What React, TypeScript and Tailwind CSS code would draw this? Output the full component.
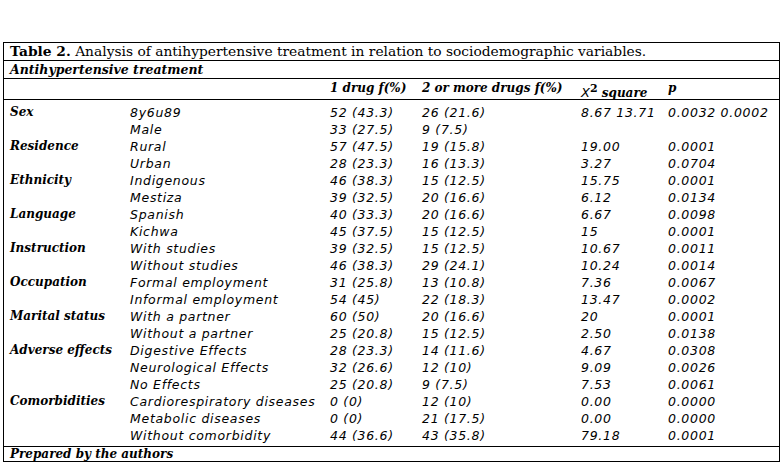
const rows: [string, string, string, string, string, string][] = [
  ["Sex", "8y6u89", "52 (43.3)", "26 (21.6)", "8.67 13.71", "0.0032 0.0002"],
  ["", "Male", "33 (27.5)", "9 (7.5)", "", ""],
  ["Residence", "Rural", "57 (47.5)", "19 (15.8)", "19.00", "0.0001"],
  ["", "Urban", "28 (23.3)", "16 (13.3)", "3.27", "0.0704"],
  ["Ethnicity", "Indigenous", "46 (38.3)", "15 (12.5)", "15.75", "0.0001"],
  ["", "Mestiza", "39 (32.5)", "20 (16.6)", "6.12", "0.0134"],
  ["Language", "Spanish", "40 (33.3)", "20 (16.6)", "6.67", "0.0098"],
  ["", "Kichwa", "45 (37.5)", "15 (12.5)", "15", "0.0001"],
  ["Instruction", "With studies", "39 (32.5)", "15 (12.5)", "10.67", "0.0011"],
  ["", "Without studies", "46 (38.3)", "29 (24.1)", "10.24", "0.0014"],
  ["Occupation", "Formal employment", "31 (25.8)", "13 (10.8)", "7.36", "0.0067"],
  ["", "Informal employment", "54 (45)", "22 (18.3)", "13.47", "0.0002"],
  ["Marital status", "With a partner", "60 (50)", "20 (16.6)", "20", "0.0001"],
  ["", "Without a partner", "25 (20.8)", "15 (12.5)", "2.50", "0.0138"],
  ["Adverse effects", "Digestive Effects", "28 (23.3)", "14 (11.6)", "4.67", "0.0308"],
  ["", "Neurological Effects", "32 (26.6)", "12 (10)", "9.09", "0.0026"],
  ["", "No Effects", "25 (20.8)", "9 (7.5)", "7.53", "0.0061"],
  ["Comorbidities", "Cardiorespiratory diseases", "0 (0)", "12 (10)", "0.00", "0.0000"],
  ["", "Metabolic diseases", "0 (0)", "21 (17.5)", "0.00", "0.0000"],
  ["", "Without comorbidity", "44 (36.6)", "43 (35.8)", "79.18", "0.0001"],
];

const serif = "font-['DejaVu_Serif',serif]";
const sans = "font-['DejaVu_Sans',Verdana,sans-serif]";
const cols = "grid grid-cols-[120px_200px_92px_159px_87px_1fr]";
const cell = `italic text-[12.5px] tracking-[0.7px] ${sans}`;

export default function App() {
  return (
    <div className="min-h-[465px] w-[783px] bg-white pl-[3px] pt-[42px] text-black">
      <div className="w-[777px] border border-black">
        <div className={`h-[18px] overflow-hidden border-b border-black pl-[6px] text-[13.8px] leading-[17px] ${serif}`}>
          <span className="font-bold">Table 2.</span> Analysis of antihypertensive treatment in relation to sociodemographic variables.
        </div>
        <div className={`h-[18px] border-b border-black pl-[6px] text-[12.5px] font-bold italic leading-[17px] ${serif}`}>
          Antihypertensive treatment
        </div>
        <div className={`${cols} h-[21px] border-b border-black pl-[6px] text-[12px] font-bold italic leading-[17px] ${serif}`}>
          <div />
          <div />
          <div className="pt-[1px]">1 drug f(%)</div>
          <div className="pt-[1px]">2 or more drugs f(%)</div>
          <div className="whitespace-nowrap pt-[5px]">
            <span className={`${sans} text-[13px] font-normal`}>X</span>
            <sup className="text-[11px] not-italic">2</sup> square
          </div>
          <div className="pt-[1px]">p</div>
        </div>
        <div className="pb-[2px] pl-[6px] pt-[4px]">
          {rows.map((r, i) => (
            <div key={i} className={`${cols} h-[17px] items-center leading-[17px]`}>
              <div className={`text-[12px] font-bold italic ${serif}`}>{r[0]}</div>
              <div className={cell}>{r[1]}</div>
              <div className={cell}>{r[2]}</div>
              <div className={cell}>{r[3]}</div>
              <div className={cell}>{r[4]}</div>
              <div className={`${cell} whitespace-nowrap`}>{r[5]}</div>
            </div>
          ))}
        </div>
        <div className={`h-[15px] border-t border-black pl-[6px] text-[12px] font-bold italic leading-[14px] ${serif}`}>
          Prepared by the authors
        </div>
      </div>
    </div>
  );
}
